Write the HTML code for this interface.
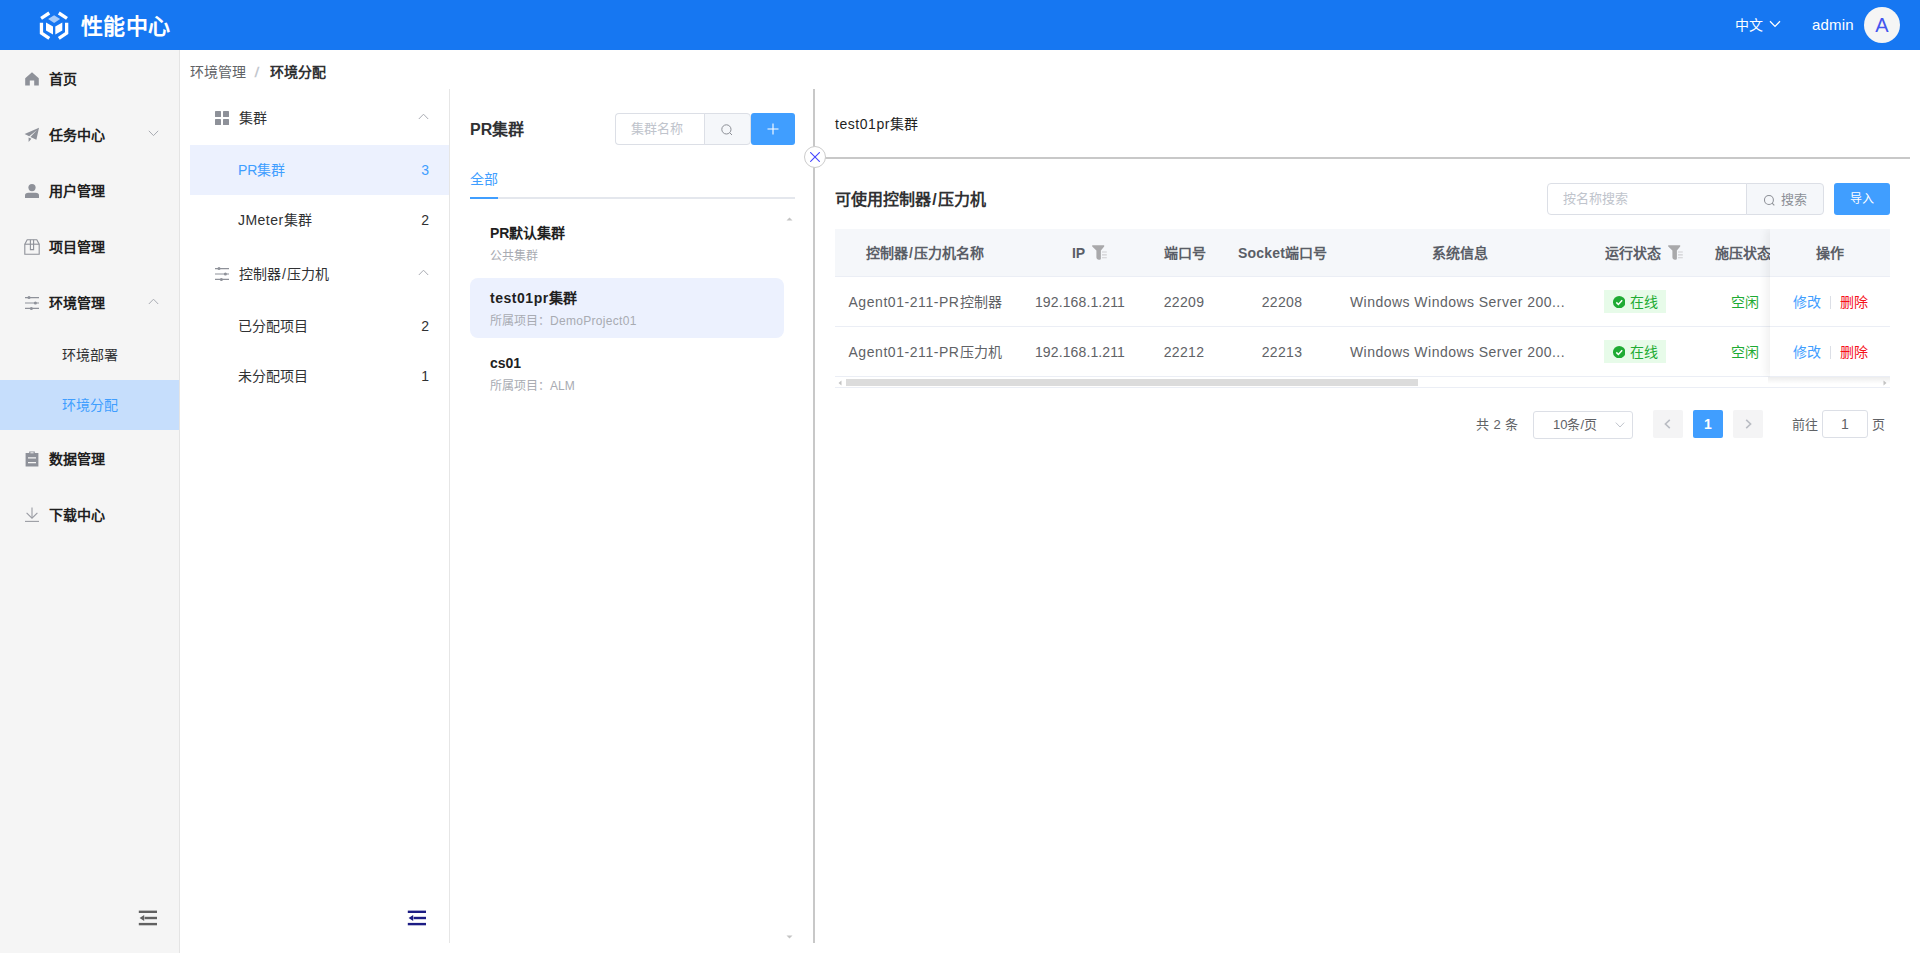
<!DOCTYPE html>
<html lang="zh-CN">
<head>
<meta charset="utf-8">
<title>性能中心</title>
<style>
*{box-sizing:border-box;margin:0;padding:0}
html,body{width:1920px;height:953px;overflow:hidden;background:#fff}
body{font-family:"Liberation Sans",sans-serif;font-size:14px;color:#303133;position:relative}
.abs{position:absolute}
.t{position:absolute;white-space:nowrap;line-height:20px;height:20px}
svg{display:block}

/* ===== header ===== */
#hdr{position:absolute;left:0;top:0;width:1920px;height:50px;background:#1677f2}
#hdr .title{position:absolute;left:81px;top:10.5px;font-size:22px;line-height:32px;font-weight:bold;color:#fff;letter-spacing:0.3px}
#hdr .lang{left:1735px;top:15px;color:#fff;font-size:14px}
#hdr .user{left:1812px;top:15px;color:#fff;font-size:15px;letter-spacing:.2px}
#hdr .avatar{position:absolute;left:1864px;top:7px;width:36px;height:36px;border-radius:50%;background:#f5f5f5;color:#4455ee;font-size:20px;line-height:36px;text-align:center}

/* ===== left sidebar ===== */
#side{position:absolute;left:0;top:50px;width:180px;height:903px;background:#f5f5f5;border-right:1px solid #e4e4e4}
#side .mi{position:absolute;left:0;width:179px;height:56px}
#side .mi .ic{position:absolute;left:24px;top:21px;width:16px;height:16px}
#side .mi .tx{position:absolute;left:49px;top:19px;line-height:20px;font-size:14px;font-weight:bold;color:#1f1f1f}
#side .mi .ar{position:absolute;left:148px;top:24px}
#side .si{position:absolute;left:0;width:179px;height:50px}
#side .si .tx{position:absolute;left:62px;top:15px;line-height:20px;font-size:14px;color:#303133}
#side .si.on{background:#c6defc}
#side .si.on .tx{color:#409eff}

/* ===== breadcrumb ===== */
#bc{position:absolute;left:190px;top:62px;font-size:14px;line-height:20px;color:#606266;white-space:nowrap}
#bc b{color:#303133;font-weight:bold}
#bc i{font-style:normal;font-weight:bold;color:#c3c7ce;margin:0 11.5px 0 8.5px;display:inline-block;transform:skewX(-8deg)}

/* ===== tree panel ===== */
#tree{position:absolute;left:190px;top:89px;width:260px;height:854px;background:#fff;border-right:1px solid #e6e6e6}
#tree .h{position:absolute;left:0;width:259px;height:56px}
#tree .h .ic{position:absolute;left:24px;top:21px;width:16px;height:16px}
#tree .h .tx{position:absolute;left:49px;top:19px;line-height:20px;font-size:14px;color:#303133}
#tree .h .ar{position:absolute;left:228px;top:24px}
#tree .r{position:absolute;left:0;width:259px;height:50px}
#tree .r .tx{position:absolute;left:48px;top:15px;line-height:20px;font-size:14px;color:#303133}
#tree .r .n{position:absolute;right:20px;top:15px;line-height:20px;font-size:14px;color:#303133}
#tree .r.on{background:#ecf1fe}
#tree .r.on .tx,#tree .r.on .n{color:#409eff}
.fold{position:absolute}

/* ===== cluster list panel ===== */
#list{position:absolute;left:450px;top:89px;width:364px;height:854px;background:#fff}
#list .ttl{position:absolute;left:20px;top:29px;font-size:16px;line-height:24px;font-weight:bold;color:#303133;white-space:nowrap}
#list .inp{position:absolute;left:165px;top:24px;width:90px;height:32px;border:1px solid #dcdfe6;border-right:0;border-radius:4px 0 0 4px;background:#fff;font-size:13px;line-height:30px;color:#c0c4cc;padding-left:15px;white-space:nowrap;overflow:hidden}
#list .sbtn{position:absolute;left:254px;top:24px;width:47px;height:32px;border:1px solid #dcdfe6;border-radius:0 4px 4px 0;background:#f5f7fa}
#list .add{position:absolute;left:301px;top:24px;width:44px;height:32px;border-radius:3px;background:#409eff}
#list .tab{position:absolute;left:20px;top:80px;font-size:14px;line-height:20px;color:#409eff;white-space:nowrap}
#list .tabline{position:absolute;left:20px;top:108px;width:325px;height:2px;background:#e4e7ed}
#list .tabact{position:absolute;left:20px;top:108px;width:28px;height:2px;background:#409eff}
#list .it{position:absolute;left:20px;width:314px;height:60px;border-radius:8px}
#list .it.on{background:#ecf1fe}
#list .it .a{position:absolute;left:20px;top:10px;font-size:14px;line-height:20px;font-weight:bold;color:#1f1f1f;white-space:nowrap}
#list .it .b{position:absolute;left:20px;top:34px;font-size:12px;line-height:18px;color:#a8abb2;white-space:nowrap}

/* ===== right panel ===== */
#vline{position:absolute;left:813px;top:89px;width:2px;height:854px;background:#c8c8c8}
#hline{position:absolute;left:815px;top:157px;width:1095px;height:2px;background:#c8c8c8}
#close{position:absolute;left:804px;top:146px;width:22px;height:22px;border-radius:50%;background:#fff;border:1px solid #cccccc}
#rt{left:835px;top:114px;font-size:14px;color:#1f1f1f}
#sec{left:835px;top:188px;font-size:16px;line-height:24px;height:24px;font-weight:bold;color:#303133}
#q{position:absolute;left:1547px;top:183px;width:200px;height:32px;border:1px solid #dcdfe6;border-radius:4px 0 0 4px;background:#fff;font-size:13px;line-height:30px;color:#c0c4cc;padding-left:15px;white-space:nowrap}
#qb{position:absolute;left:1746px;top:183px;width:78px;height:32px;border:1px solid #dcdfe6;border-radius:0 4px 4px 0;background:#f5f7fa;font-size:13px;line-height:30px;color:#8c8f96;white-space:nowrap}
#imp{position:absolute;left:1834px;top:183px;width:56px;height:32px;border-radius:3px;background:#409eff;color:#fff;font-size:12px;line-height:32px;text-align:center;white-space:nowrap}

#tb{position:absolute;left:835px;top:229px;width:1055px;height:148px;overflow:hidden}
#tb .hd{position:absolute;left:0;top:0;width:1055px;height:48px;background:#f5f7fa;border-bottom:1px solid #ebeef5}
#tb .row{position:absolute;left:0;width:1055px;height:50px;border-bottom:1px solid #ebeef5}
#tb .c{position:absolute;top:0;height:100%;white-space:nowrap;text-align:center;font-size:14px;color:#606266;line-height:51px}
#tb .hd .c{font-weight:bold;color:#5a5e67;line-height:49px}
#tb .fix{position:absolute;left:935px;top:0;width:120px;height:148px;background:#fff;box-shadow:-4px 0 8px rgba(0,0,0,.06)}
#tb .fix .fh{position:absolute;left:0;top:0;width:120px;height:48px;background:#f5f7fa;border-bottom:1px solid #ebeef5;text-align:center;line-height:49px;font-weight:bold;color:#5a5e67;font-size:14px}
#tb .fix .fr{position:absolute;left:0;width:120px;height:50px;border-bottom:1px solid #ebeef5;font-size:14px;line-height:51px;white-space:nowrap}
.tag{position:absolute;left:2px;top:13px;width:62px;height:23px;line-height:25px;padding-left:26px;background:#e7fbe9;color:#1eab33;font-size:14px;text-align:left}
.tag svg{position:absolute;left:9px;top:6px}
#tb .c.idle{color:#1eab33}
.fi{display:inline-block;vertical-align:middle;margin-left:7px;margin-top:-3px}

#sb{position:absolute;left:835px;top:377px;width:1055px;height:11px;border-bottom:1px solid #ebeef5;background:#fff}
#sb .th{position:absolute;left:11px;top:2px;width:572px;height:7px;background:#dcdcdc}

/* pagination */
.pg{position:absolute;top:414.5px;font-size:13px;line-height:20px;color:#606266;white-space:nowrap}
#psel{position:absolute;left:1533px;top:411px;width:100px;height:28px;border:1px solid #dcdfe6;border-radius:3px;background:#fff;font-size:13px;line-height:26px;color:#606266;padding-left:19px;white-space:nowrap}
.pb{position:absolute;top:410px;width:30px;height:28px;border-radius:2px;background:#f4f4f5}
#p1{position:absolute;left:1693px;top:410px;width:30px;height:28px;border-radius:2px;background:#409eff;color:#fff;font-size:14px;font-weight:bold;line-height:29px;text-align:center}
#pgo{position:absolute;left:1822px;top:410px;width:46px;height:28px;border:1px solid #dcdfe6;border-radius:3px;background:#fff;font-size:14px;line-height:26px;color:#606266;text-align:center}
</style>
</head>
<body>

<!-- ================= HEADER ================= -->
<div id="hdr">
  <svg class="abs" style="left:38px;top:8px" width="34" height="34" viewBox="0 0 34 34">
    <g fill="none" stroke="#fff" stroke-width="3.3" stroke-linejoin="miter">
      <path d="M3.10 10.40 L11.30 5.00"/>
      <path d="M29.00 10.40 L20.80 5.00"/>
      <path d="M3.45 14.70 L3.45 25.00 L11.30 30.30"/>
      <path d="M28.65 14.70 L28.65 25.00 L20.80 30.30"/>
    </g>
    <path d="M16.10 7.20 L22.10 11.10 L16.10 15.00 L10.10 11.10 Z" fill="#a5cbfb"/>
    <path d="M8.00 14.60 L15.00 18.60 L15.00 26.50 L8.00 22.50 Z" fill="#fff"/>
    <path d="M24.30 14.60 L17.30 18.60 L17.30 26.50 L24.30 22.50 Z" fill="#fff"/>
  </svg>
  <div class="title">性能中心</div>
  <div class="t lang">中文</div>
  <svg class="abs" style="left:1769px;top:20px" width="12" height="8" viewBox="0 0 12 8"><path d="M1 1.2 L6 6.4 L11 1.2" fill="none" stroke="#fff" stroke-width="1.3"/></svg>
  <div class="t user">admin</div>
  <div class="avatar">A</div>
</div>

<!-- ================= LEFT SIDEBAR ================= -->
<div id="side">
  <div class="mi" style="top:0"><svg class="ic" viewBox="0 0 16 16"><path d="M8 1.2 L14.8 7.2 L14.8 14.6 L10.2 14.6 L10.2 9.6 L5.8 9.6 L5.8 14.6 L1.2 14.6 L1.2 7.2 Z" fill="#8e9199"/></svg><div class="tx">首页</div></div>
  <div class="mi" style="top:56px"><svg class="ic" viewBox="0 0 16 16"><path d="M15 0.8 L0.6 7 L5.2 9.2 L13 3 L6.4 10 L12.4 12.8 Z M4.6 10.4 L4.6 15 L7.4 11.8 Z" fill="#8e9199"/></svg><div class="tx">任务中心</div><svg class="ar" width="11" height="7" viewBox="0 0 11 7"><path d="M0.8 0.8 L5.5 5.6 L10.2 0.8" fill="none" stroke="#a8abb2" stroke-width="1"/></svg></div>
  <div class="mi" style="top:112px"><svg class="ic" viewBox="0 0 16 16"><circle cx="8" cy="4.6" r="3.6" fill="#8e9199"/><path d="M1 15 L1 12.6 Q1 9.8 4.4 9.8 L11.6 9.8 Q15 9.8 15 12.6 L15 15 Z" fill="#8e9199"/></svg><div class="tx">用户管理</div></div>
  <div class="mi" style="top:168px"><svg class="ic" viewBox="0 0 16 16"><g fill="none" stroke="#8e9199" stroke-width="1.1"><path d="M0.8 5.2 L3.2 0.8 L12.8 0.8 L15.2 5.2 L15.2 15.2 L0.8 15.2 Z"/><path d="M0.8 5.2 L15.2 5.2"/><path d="M6.4 0.8 L6.4 10.6 L9.6 10.6 L9.6 0.8"/></g></svg><div class="tx">项目管理</div></div>
  <div class="mi" style="top:224px"><svg class="ic" viewBox="0 0 16 16"><g stroke="#8e9199" stroke-width="1.2" fill="#8e9199"><path d="M1 2.6 H15 M1 8 H15 M1 13.4 H15"/><circle cx="5" cy="2.6" r="1.5" stroke="none"/><circle cx="11.4" cy="8" r="1.5" stroke="none"/><circle cx="7.4" cy="13.4" r="1.5" stroke="none"/></g></svg><div class="tx">环境管理</div><svg class="ar" width="11" height="7" viewBox="0 0 11 7"><path d="M0.8 6 L5.5 1.2 L10.2 6" fill="none" stroke="#a8abb2" stroke-width="1"/></svg></div>
  <div class="si" style="top:280px"><div class="tx">环境部署</div></div>
  <div class="si on" style="top:330px"><div class="tx">环境分配</div></div>
  <div class="mi" style="top:380px"><svg class="ic" viewBox="0 0 16 16"><path d="M5.2 0.4 H10.8 V2 H14.4 V15.6 H1.6 V2 H5.2 Z" fill="#8e9199"/><path d="M6.4 1.8 H9.6" stroke="#f5f5f5" stroke-width="1"/><path d="M4 6.8 H12 M4 11.6 H12" stroke="#f5f5f5" stroke-width="1.3"/></svg><div class="tx">数据管理</div></div>
  <div class="mi" style="top:436px"><svg class="ic" viewBox="0 0 16 16"><g fill="none" stroke="#9a9ca3" stroke-width="1.1"><path d="M8 0.6 V11"/><path d="M2.6 5.8 L8 11.2 L13.4 5.8"/><path d="M1 14.4 H15"/></g></svg><div class="tx">下载中心</div></div>
</div>


<!-- ================= BREADCRUMB ================= -->
<div id="bc">环境管理<i>/</i><b>环境分配</b></div>

<!-- ================= TREE PANEL ================= -->
<div id="tree">
  <div class="h" style="top:0"><svg class="ic" viewBox="0 0 16 16"><g fill="#8e9199"><rect x="1" y="1" width="6" height="6" rx="0.6"/><rect x="9" y="1" width="6" height="6" rx="0.6"/><rect x="1" y="9" width="6" height="6" rx="0.6"/><rect x="9" y="9" width="6" height="6" rx="0.6"/></g></svg><div class="tx">集群</div><svg class="ar" width="11" height="7" viewBox="0 0 11 7"><path d="M0.8 6 L5.5 1.2 L10.2 6" fill="none" stroke="#a8abb2" stroke-width="1"/></svg></div>
  <div class="r on" style="top:56px"><div class="tx">PR集群</div><div class="n">3</div></div>
  <div class="r" style="top:106px"><div class="tx"><span style="letter-spacing:0.46px">JMeter</span>集群</div><div class="n">2</div></div>
  <div class="h" style="top:156px"><svg class="ic" viewBox="0 0 16 16"><g stroke="#8e9199" stroke-width="1.2" fill="#8e9199"><path d="M1 2.6 H15 M1 8 H15 M1 13.4 H15"/><circle cx="5" cy="2.6" r="1.5" stroke="none"/><circle cx="11.4" cy="8" r="1.5" stroke="none"/><circle cx="7.4" cy="13.4" r="1.5" stroke="none"/></g></svg><div class="tx">控制器<span style="letter-spacing:1px;margin-left:1px">/</span>压力机</div><svg class="ar" width="11" height="7" viewBox="0 0 11 7"><path d="M0.8 6 L5.5 1.2 L10.2 6" fill="none" stroke="#a8abb2" stroke-width="1"/></svg></div>
  <div class="r" style="top:212px"><div class="tx">已分配项目</div><div class="n">2</div></div>
  <div class="r" style="top:262px"><div class="tx">未分配项目</div><div class="n">1</div></div>
</div>

<!-- fold icons -->
<svg class="fold" style="left:138px;top:910px" width="20" height="16" viewBox="0 0 20 16"><g fill="#616161"><rect x="0.8" y="0.6" width="18.2" height="2.4"/><rect x="6.6" y="6.8" width="12.4" height="2.4"/><rect x="0.8" y="12.9" width="18.2" height="2.4"/><path d="M1.6 8 L6.2 5 L6.2 11 Z"/></g></svg>
<svg class="fold" style="left:407px;top:910px" width="20" height="16" viewBox="0 0 20 16"><g fill="#1c1c84"><rect x="0.8" y="0.6" width="18.2" height="2.4"/><rect x="6.6" y="6.8" width="12.4" height="2.4"/><rect x="0.8" y="12.9" width="18.2" height="2.4"/><path d="M1.6 8 L6.2 5 L6.2 11 Z"/></g></svg>


<!-- ================= CLUSTER LIST PANEL ================= -->
<div id="list">
  <div class="ttl">PR集群</div>
  <div class="inp">集群名称</div>
  <div class="sbtn"><svg class="abs" style="left:15px;top:9px" width="14" height="14" viewBox="0 0 14 14"><circle cx="6.4" cy="6.4" r="4.6" fill="none" stroke="#8c8f96" stroke-width="1"/><path d="M9.8 9.8 L12 12" stroke="#8c8f96" stroke-width="1"/></svg></div>
  <div class="add"><svg class="abs" style="left:16px;top:10px" width="12" height="12" viewBox="0 0 12 12"><path d="M6 0.5 V11.5 M0.5 6 H11.5" stroke="#fff" stroke-width="1.1"/></svg></div>
  <div class="tab">全部</div>
  <div class="tabline"></div><div class="tabact"></div>
  <div class="it" style="top:124px"><div class="a">PR默认集群</div><div class="b">公共集群</div></div>
  <div class="it on" style="top:189px"><div class="a"><span style="letter-spacing:0.53px">test01pr</span>集群</div><div class="b">所属项目：<span style="letter-spacing:0.3px">DemoProject01</span></div></div>
  <div class="it" style="top:254px"><div class="a">cs01</div><div class="b">所属项目：ALM</div></div>
  <svg class="abs" style="left:336px;top:128px" width="7" height="4" viewBox="0 0 7 4"><path d="M3.5 0.5 L6.5 3.5 L0.5 3.5 Z" fill="#c4c4c4"/></svg>
  <svg class="abs" style="left:336px;top:846px" width="7" height="4" viewBox="0 0 7 4"><path d="M3.5 3.5 L6.5 0.5 L0.5 0.5 Z" fill="#c4c4c4"/></svg>
</div>


<!-- ================= RIGHT PANEL ================= -->
<div id="vline"></div>
<div id="hline"></div>
<div id="close"><svg class="abs" style="left:5px;top:5px" width="10" height="10" viewBox="0 0 10 10"><path d="M0.2 0.2 L9.8 9.8 M9.8 0.2 L0.2 9.8" stroke="#4444ff" stroke-width="1.1"/></svg></div>
<div class="t" id="rt"><span style="letter-spacing:0.55px">test01pr</span>集群</div>
<div class="t" id="sec">可使用控制器<span style="letter-spacing:1.3px;margin-left:1.3px">/</span>压力机</div>
<div id="q">按名称搜索</div>
<div id="qb"><svg class="abs" style="left:16px;top:10px" width="13" height="13" viewBox="0 0 14 14"><circle cx="6.4" cy="6.4" r="4.8" fill="none" stroke="#8c8f96" stroke-width="1.1"/><path d="M9.8 9.8 L12.2 12.2" stroke="#8c8f96" stroke-width="1.1"/></svg><span style="position:absolute;left:33.5px;top:1px">搜索</span></div>
<div id="imp">导入</div>

<div id="tb">
  <div class="hd">
    <div class="c" style="left:0;width:180px">控制器<span style="letter-spacing:1px;margin-left:1px">/</span>压力机名称</div>
    <div class="c" style="left:181px;width:147px">IP<svg class="fi" width="15" height="15" viewBox="0 0 15 15"><path d="M0.2 0.2 H12.2 V1.6 L8.9 5.4 V13.6 Q8.9 14.8 7.7 14.8 L6.6 14.8 Q4.4 14.6 4.4 12.6 V5.4 L0.2 1.6 Z" fill="#a9a9ab"/><path d="M10 7 H14.8 M10 9.9 H14.8 M10 12.8 H14.8" stroke="#cfd0d2" stroke-width="1.1"/></svg></div>
    <div class="c" style="left:311px;width:78px">端口号</div>
    <div class="c" style="left:388.5px;width:118px"><span style="letter-spacing:.2px">Socket</span>端口号</div>
    <div class="c" style="left:507px;width:236px">系统信息</div>
    <div class="c" style="left:770px;width:90px;text-align:left">运行状态<svg class="fi" width="15" height="15" viewBox="0 0 15 15"><path d="M0.2 0.2 H12.2 V1.6 L8.9 5.4 V13.6 Q8.9 14.8 7.7 14.8 L6.6 14.8 Q4.4 14.6 4.4 12.6 V5.4 L0.2 1.6 Z" fill="#a9a9ab"/><path d="M10 7 H14.8 M10 9.9 H14.8 M10 12.8 H14.8" stroke="#cfd0d2" stroke-width="1.1"/></svg></div>
    <div class="c" style="left:880px;width:60px;text-align:left">施压状态</div>
  </div>
  <div class="row" style="top:48px">
    <div class="c" style="left:0;width:180px"><span style="letter-spacing:0.56px">Agent01-211-PR</span>控制器</div>
    <div class="c" style="left:180px;width:130px"><span style="letter-spacing:0.12px">192.168.1.211</span></div>
    <div class="c" style="left:310px;width:78px"><span style="letter-spacing:0.3px">22209</span></div>
    <div class="c" style="left:388px;width:118px"><span style="letter-spacing:0.3px">22208</span></div>
    <div class="c" style="left:504.5px;width:236px"><span style="letter-spacing:0.47px">Windows Windows Server 200...</span></div>
    <div class="c" style="left:767px;width:100px;text-align:left"><span class="tag"><svg width="12.4" height="12.4" viewBox="0 0 12 12"><circle cx="6" cy="6" r="6" fill="#1eab33"/><path d="M3.2 6.2 L5.2 8.2 L8.9 4.2" fill="none" stroke="#fff" stroke-width="1.5"/></svg>在线</span></div>
    <div class="c idle" style="left:880px;width:60px">空闲</div>
  </div>
  <div class="row" style="top:98px">
    <div class="c" style="left:0;width:180px"><span style="letter-spacing:0.56px">Agent01-211-PR</span>压力机</div>
    <div class="c" style="left:180px;width:130px"><span style="letter-spacing:0.12px">192.168.1.211</span></div>
    <div class="c" style="left:310px;width:78px"><span style="letter-spacing:0.3px">22212</span></div>
    <div class="c" style="left:388px;width:118px"><span style="letter-spacing:0.3px">22213</span></div>
    <div class="c" style="left:504.5px;width:236px"><span style="letter-spacing:0.47px">Windows Windows Server 200...</span></div>
    <div class="c" style="left:767px;width:100px;text-align:left"><span class="tag"><svg width="12.4" height="12.4" viewBox="0 0 12 12"><circle cx="6" cy="6" r="6" fill="#1eab33"/><path d="M3.2 6.2 L5.2 8.2 L8.9 4.2" fill="none" stroke="#fff" stroke-width="1.5"/></svg>在线</span></div>
    <div class="c idle" style="left:880px;width:60px">空闲</div>
  </div>

  <div class="fix">
    <div class="fh">操作</div>
    <div class="fr" style="top:48px"><span style="position:absolute;left:23px;color:#409eff">修改</span><span style="position:absolute;left:60px;top:19px;width:1px;height:13px;background:#dcdfe6"></span><span style="position:absolute;left:70px;color:#f5101a">删除</span></div>
    <div class="fr" style="top:98px"><span style="position:absolute;left:23px;color:#409eff">修改</span><span style="position:absolute;left:60px;top:19px;width:1px;height:13px;background:#dcdfe6"></span><span style="position:absolute;left:70px;color:#f5101a">删除</span></div>
  </div>
</div>
<div class="abs" style="left:1768px;top:377px;width:122px;height:7px;background:linear-gradient(to bottom,rgba(0,0,0,.07),rgba(0,0,0,0));z-index:3"></div>
<div id="sb"><div class="th"></div>
  <svg class="abs" style="left:3px;top:3px" width="4" height="6" viewBox="0 0 4 6"><path d="M3.5 0.5 L0.5 3 L3.5 5.5 Z" fill="#c4c4c4"/></svg>
  <svg class="abs" style="left:1047.5px;top:2.5px" width="4" height="6" viewBox="0 0 4 6"><path d="M0.5 0.5 L3.5 3 L0.5 5.5 Z" fill="#c4c4c4"/></svg>
</div>

<div class="pg" style="left:1476px;word-spacing:.8px">共 2 条</div>
<div id="psel">10条/页<svg class="abs" style="left:81px;top:10px" width="10" height="6" viewBox="0 0 10 6"><path d="M0.8 0.6 L5 5 L9.2 0.6" fill="none" stroke="#c0c4cc" stroke-width="1"/></svg></div>
<div class="pb" style="left:1653px"><svg class="abs" style="left:11px;top:9px" width="7" height="10" viewBox="0 0 7 10"><path d="M5.8 0.8 L1.4 5 L5.8 9.2" fill="none" stroke="#b9bcc3" stroke-width="1.6"/></svg></div>
<div id="p1">1</div>
<div class="pb" style="left:1733px"><svg class="abs" style="left:12px;top:9px" width="7" height="10" viewBox="0 0 7 10"><path d="M1.2 0.8 L5.6 5 L1.2 9.2" fill="none" stroke="#b9bcc3" stroke-width="1.6"/></svg></div>
<div class="pg" style="left:1792px">前往</div>
<div id="pgo">1</div>
<div class="pg" style="left:1872px">页</div>




</body>
</html>
